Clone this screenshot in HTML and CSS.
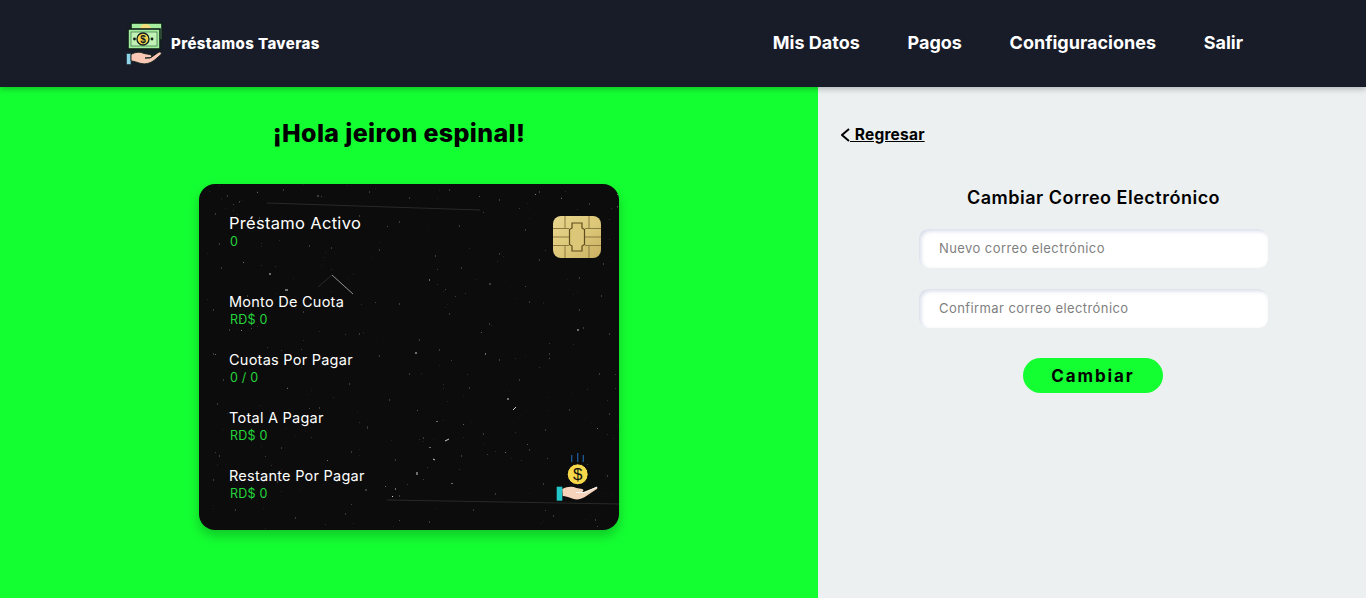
FILE: index.html
```html
<!DOCTYPE html>
<html lang="es">
<head>
<meta charset="utf-8">
<title>Préstamos Taveras</title>
<link rel="stylesheet" href="styles.css">
</head>
<body>
<header class="topbar">
  <a class="brand" href="#">
    <svg class="brand-logo" viewBox="0 0 38 44" width="38" height="44">
      <rect x="5" y="1" width="31" height="17" fill="#a6ee9f" stroke="#10201a" stroke-width="1.6"/>
      <path d="M14 7a5 4.500 0 0 1 11 0z" fill="#f5dd7a"/>
      <rect x="2" y="7" width="32" height="20" fill="#a4ec9e" stroke="#10201a" stroke-width="1.6"/>
      <rect x="5" y="10" width="26" height="14" fill="#bff2b4" stroke="#3b6b46" stroke-width=".7"/>
      <circle cx="17" cy="17" r="6" fill="#f5d24f" stroke="#10201a" stroke-width="1.300"/>
      <text class="logo-sign" x="17" y="20.500" text-anchor="middle">$</text>
      <circle cx="8.500" cy="17" r="1.400" fill="#10201a"/>
      <circle cx="26" cy="17" r="1.400" fill="#10201a"/>
      <rect x="0.500" y="31.500" width="4.500" height="11" fill="#8fd3e8" stroke="#22303a" stroke-width=".7"/>
      <path d="M5 32.500c4-2.500 9-3 13-1l6 1c2.500 .5 2 3.500-1 3.500h-4l6-.5 8-5.500c2-.5 3 1 2 2.500l-7 6c-4 3-9 4-13 3-4-1-7-2.500-10-2.500z" fill="#f9c7b4" stroke="#10201a" stroke-width=".9"/>
    </svg>
    <span class="brand-name">Préstamos Taveras</span>
  </a>
  <nav class="menu">
    <a href="#">Mis Datos</a>
    <a href="#">Pagos</a>
    <a href="#">Configuraciones</a>
    <a href="#">Salir</a>
  </nav>
</header>
<main class="layout">
  <section class="left">
    <h1 class="greeting">¡Hola jeiron espinal!</h1>
    <article class="card">
      <svg class="grain" viewBox="0 0 420 346" width="420" height="346">
        <defs>
          <filter id="noise" x="0" y="0" width="100%" height="100%">
            <feTurbulence type="fractalNoise" baseFrequency=".5" numOctaves="2" seed="7"/>
            <feColorMatrix type="matrix" values="0 0 0 0 .45  0 0 0 0 .45  0 0 0 0 .45  5 5 0 0 -7.100"/>
          </filter>
        </defs>
        <rect width="420" height="346" filter="url(#noise)"/>
        <path class="scratch-dim" d="M68 19 281 26M188 316 420 320M119 103 133 91"/>
        <path class="scratch" d="M133 91 154 110"/>
        <path class="bright" d="M216 169h2M286 170h1M317 223l-3 3M308 215h2M238 237v1M231 263v1M234 275l2 1M246 257l4-2M218 288v3M253 299v1M193 312l1 1M196 305h1M70 90h2M86 106h3M230 96h1M378 146h2"/>
        <path class="specks" d="M28 12h1M40 18h1M84 6h1M118 12h2M170 8h1M210 14h1M250 6h1M300 16h1M340 8h1M390 20h1M16 30h1M60 34h1M160 32h1M200 38h1M260 42h1M326 46h1M20 60h1M110 62h1M180 66h1M236 72h1M300 70h1M340 76h1M22 84h1M48 112h1M262 84h1M290 100h2M380 94h1M404 80h1M14 126h1M104 128h1M200 120h1M250 130h1M330 118h1M380 126h1M402 112h1M30 146h1M160 150h1M220 156h1M290 140h1M410 150h1M14 170h1M180 172h1M240 166h1M300 176h1M350 170h1M384 144h1M24 196h1M150 200h1M210 190h1M270 204h1M320 196h1M400 190h1M18 220h1M120 224h1M190 216h1M370 226h1M410 230h1M40 248h1M168 244h1M224 254h1M284 250h1M346 246h1M20 272h1M152 268h1M196 276h1M262 272h1M330 266h1M14 296h1M78 298h1M166 306h2M200 312h1M296 310h1M344 300h1M408 292h1M36 326h1M96 334h1M146 330h1M230 338h1M274 326h1M354 332h1M396 336h1"/>
      </svg>
      <svg class="chip" viewBox="0 0 48 42" width="48" height="42">
        <defs>
          <linearGradient id="gold" x1="0" y1="0" x2="1" y2="1">
            <stop offset="0" stop-color="#e8d68e"/>
            <stop offset=".55" stop-color="#dcc677"/>
            <stop offset="1" stop-color="#c9ae62"/>
          </linearGradient>
        </defs>
        <rect x="0" y="0" width="48" height="42" rx="8" fill="url(#gold)"/>
        <path d="M0 12.500h16M0 21h16M0 29.500h16M32 12.500h16M32 21h16M32 29.500h16M12 0v12M36 0v12M12 42V30M36 42V30" stroke="#8d7a3e" stroke-width="1" fill="none"/>
        <path d="M19 7h10v5l2.500 1.500v15L29 30v5H19v-5l-2.500-1.500v-15L19 12z" fill="#dcc677" stroke="#5f4c1f" stroke-width="1.200"/>
      </svg>
      <div class="stat stat-main">
        <h2>Préstamo Activo</h2>
        <p>0</p>
      </div>
      <div class="stat">
        <h3>Monto De Cuota</h3>
        <p>RD$ 0</p>
      </div>
      <div class="stat">
        <h3>Cuotas Por Pagar</h3>
        <p>0 / 0</p>
      </div>
      <div class="stat">
        <h3>Total A Pagar</h3>
        <p>RD$ 0</p>
      </div>
      <div class="stat">
        <h3>Restante Por Pagar</h3>
        <p>RD$ 0</p>
      </div>
      <svg class="coin" viewBox="0 0 44 52" width="44" height="52">
        <path d="M17.700 3v7M23.700 1v9M29.300 3v7" stroke="#1f5a96" stroke-width="1.300" fill="none"/>
        <circle cx="23.700" cy="22.300" r="10.500" fill="#f7d84a" stroke="#050505" stroke-width="1"/>
        <text class="coin-sign" x="23.700" y="28.300" text-anchor="middle">$</text>
        <rect x="2.700" y="34.700" width="5.600" height="14" fill="#22c6c8"/>
        <path d="M8.300 37c5-2.500 10-3 14-1l6 1c2 1 1 3-1 3h-4 6l13-5c1.500 0 1.500 1 .5 2l-12 8c-5 3-10 3-14 1-3-1-5-2-8-2z" fill="#f6d3bb"/>
        <path d="M22 40.500h9l12-5.500" stroke="#f4f4f4" stroke-width="1" fill="none"/>
      </svg>
    </article>
  </section>
  <section class="right">
    <a class="back" href="#">
      <svg class="back-icon" viewBox="0 0 9 14" width="9" height="14"><path d="M8 1 1 7 8 13" fill="none" stroke="#000" stroke-width="1.900"/></svg><span class="back-text"> Regresar</span>
    </a>
    <form class="form">
      <h2 class="form-title">Cambiar Correo Electrónico</h2>
      <input class="field" type="email" placeholder="Nuevo correo electrónico">
      <input class="field" type="email" placeholder="Confirmar correo electrónico">
      <button class="submit" type="button">Cambiar</button>
    </form>
  </section>
</main>
</body>
</html>
```
FILE: styles.css
```css
* { box-sizing: border-box; }
html, body { margin: 0; height: 100%; }
body {
  display: flex;
  flex-direction: column;
  height: 598px;
  overflow: hidden;
  font-family: Inter, "Open Sans", sans-serif;
  color: #000;
}
a { color: inherit; text-decoration: none; }
.topbar {
  height: 87px;
  flex: none;
  background: #181c28;
  display: flex;
  align-items: center;
  justify-content: space-between;
  padding: 0 123px 0 126px;
  position: relative;
  z-index: 2;
  box-shadow: 0 2px 6px rgba(0, 0, 0, .25);
}
.brand { display: flex; align-items: center; gap: 7px; color: #fff; }
.brand-logo { flex: none; }
.brand-name { font-size: 15px; font-weight: 800; letter-spacing: .4px; }
.menu { display: flex; gap: 47.7px; color: #fff; font-size: 18px; font-weight: 700; margin-bottom: 2px; }
.layout { flex: 1; display: grid; grid-template-columns: 818px 548px; min-height: 0; }
.left {
  background: #14ff32;
  display: flex;
  flex-direction: column;
  align-items: center;
  padding-top: 33px;
}
.greeting { margin: -1px 20px 0 0; font-size: 25px; line-height: 29px; font-weight: 800; letter-spacing: .35px; }
.card {
  position: relative;
  width: 420px;
  height: 346px;
  margin-top: 36px;
  padding: 30px 30px 0;
  background: #0c0c0c;
  border-radius: 16px;
  box-shadow: 0 6px 12px rgba(0, 0, 0, .22);
  overflow: hidden;
  color: #fff;
}
.grain { position: absolute; left: 0; top: 0; }
.scratch { fill: none; stroke: #c8c8c8; stroke-width: .7; }
.scratch-dim { fill: none; stroke: #3c3c3c; stroke-width: .6; }
.bright { fill: none; stroke: #d0d0d0; stroke-width: 1; }
.specks { fill: none; stroke: #6a6a6a; stroke-width: 1; }
.chip { position: absolute; left: 354px; top: 32px; }
.coin { position: absolute; left: 355px; top: 268px; }
.coin-sign { font: 400 17px "Liberation Sans", sans-serif; fill: #111; }
.logo-sign { font: 700 10px "Liberation Sans", sans-serif; fill: #10201a; }
.stat { position: relative; height: 58px; }
.stat-main { height: 60px; margin-bottom: 20px; }
.stat h2 { margin: -1px 0 0; font-size: 16.5px; line-height: 20px; font-weight: 400; letter-spacing: .3px; }
.stat h3 { margin: 0 0 1px; font-size: 14.5px; line-height: 17px; font-weight: 400; letter-spacing: .25px; }
.stat p { margin: 0 0 0 1px; color: #25d53c; font-size: 12.5px; line-height: 17px; font-weight: 400; letter-spacing: .2px; }
.right { background: #ecf0f1; padding: 38px 0 0 23px; }
.back { display: inline-flex; align-items: center; font-size: 15.5px; line-height: 20px; font-weight: 700; letter-spacing: .2px; }
.back-icon { flex: none; }
.back-text { text-decoration: underline; white-space: pre; word-spacing: 1px; }
.form {
  display: flex;
  flex-direction: column;
  align-items: center;
  width: 349px;
  margin: 41px 0 0 78px;
}
.form-title { margin: 0 0 20px; font-size: 18px; line-height: 22px; font-weight: 600; letter-spacing: .5px; white-space: nowrap; }
.field {
  width: 349px;
  height: 39px;
  margin-bottom: 21px;
  padding: 0 20px 1px;
  border: 0;
  border-radius: 9px;
  background: #fff;
  font: 400 13px Inter, sans-serif;
  letter-spacing: .42px;
  box-shadow: inset 2px 2px 4px #d6dbe8;
  outline: none;
}
.field::placeholder { color: #7f7f7f; opacity: 1; }
.submit {
  width: 140px;
  height: 35px;
  margin: 9px 1px 0 0;
  border: 0;
  border-radius: 18px;
  background: #14ff32;
  color: #000;
  font: 700 17px Inter, sans-serif;
  letter-spacing: 1.9px;
}
```
